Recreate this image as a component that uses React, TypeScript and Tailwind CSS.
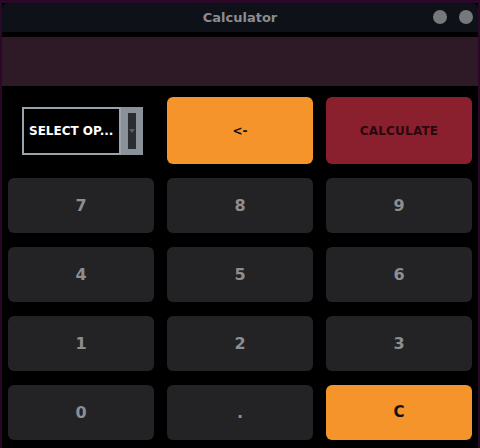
import React from "react";

const font = { fontFamily: '"DejaVu Sans", "Liberation Sans", sans-serif' };

function Key({ label, variant = "dark", small = false }: { label: string; variant?: "dark" | "orange" | "red"; small?: boolean }) {
  const cls =
    variant === "orange"
      ? `bg-[#f4942a] text-[#111111] ${small ? "text-[12px]" : "text-[15px]"}`
      : variant === "red"
      ? "bg-[#8a1f2e] text-[#2a080e] text-[12px] tracking-[0.2px]"
      : "bg-[#232326] text-[#8e8e90] text-[16px]";
  return (
    <div className={`flex items-center justify-center rounded-[6px] font-bold ${cls}`}>{label}</div>
  );
}

export default function App() {
  return (
    <div className="w-[480px] h-[448px] bg-[#2a0828] pt-[3px] pl-[2px] pr-[2px] overflow-hidden" style={font}>
      <div className="w-[476px] h-[445px] bg-black flex flex-col">
        <div className="h-[29px] bg-[#0f1119] rounded-t-[6px] relative flex items-center justify-center">
          <span className="text-[13px] font-bold text-[#8c8c90]">Calculator</span>
          <div className="absolute right-[5px] top-[7px] flex gap-[12px]">
            <div className="w-[14px] h-[14px] rounded-full bg-[#77787c]" />
            <div className="w-[14px] h-[14px] rounded-full bg-[#77787c]" />
          </div>
        </div>
        <div className="h-[5px] bg-black" />
        <div className="h-[49px] bg-[#2d1a26]" />
        <div className="pt-[11px] pl-[6px] grid grid-cols-[146px_146px_146px] grid-rows-[67px_55px_55px_55px_55px] gap-x-[13px] gap-y-[14px]">
          <div className="flex items-center justify-center">
            <div className="w-[121px] h-[48px] flex ml-[3px] mt-[1px]">
              <div className="w-[99px] h-full bg-black border-2 border-[#9aa2aa] flex items-center pl-[5px]">
                <span className="text-white text-[12px] font-bold whitespace-nowrap">SELECT OP...</span>
              </div>
              <div className="flex-1 h-full bg-[#8a9199] flex items-center justify-center">
                <div className="w-[8px] h-[36px] bg-[#2a2d31] relative flex items-center justify-center">
                  <div className="w-0 h-0 border-l-[3px] border-r-[3px] border-t-[4px] border-l-transparent border-r-transparent border-t-[#5a5e63]" />
                </div>
              </div>
            </div>
          </div>
          <Key label="<-" variant="orange" small />
          <Key label="CALCULATE" variant="red" />
          <Key label="7" />
          <Key label="8" />
          <Key label="9" />
          <Key label="4" />
          <Key label="5" />
          <Key label="6" />
          <Key label="1" />
          <Key label="2" />
          <Key label="3" />
          <Key label="0" />
          <Key label="." />
          <Key label="C" variant="orange" />
        </div>
      </div>
    </div>
  );
}
